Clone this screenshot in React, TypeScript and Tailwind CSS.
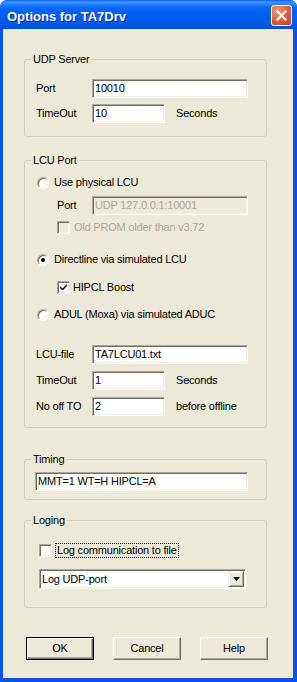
import React from "react";

const sunken =
  "border border-t-[#ACA899] border-l-[#ACA899] border-r-white border-b-white shadow-[inset_1px_1px_0_#716F64,inset_-1px_-1px_0_#F1EFE2]";

function Edit({ value, w, disabled }: { value: string; w: string; disabled?: boolean }) {
  return (
    <div
      className={`h-[19px] ${w} ${sunken} flex items-center pl-[2px] whitespace-nowrap overflow-hidden ${
        disabled ? "bg-[#ECE9D8] text-[#ACA899]" : "bg-white text-black"
      }`}
    >
      {value}
    </div>
  );
}

function Radio({ checked }: { checked?: boolean }) {
  return (
    <span
      className={`w-[12px] h-[12px] rounded-full bg-white ${sunken} flex items-center justify-center shrink-0`}
    >
      {checked && <span className="w-[4px] h-[4px] rounded-full bg-black" />}
    </span>
  );
}

function Check({ checked, disabled }: { checked?: boolean; disabled?: boolean }) {
  return (
    <span
      className={`w-[13px] h-[13px] ${sunken} flex items-center justify-center shrink-0 ${
        disabled ? "bg-[#ECE9D8]" : "bg-white"
      }`}
    >
      {checked && (
        <svg width="7" height="7" viewBox="0 0 7 7">
          <path d="M0 2 L0 4 L2 6 L3 6 L7 2 L7 0 L2.5 4.5 Z" fill="#000" />
        </svg>
      )}
    </span>
  );
}

function Group({
  title,
  className,
  children,
}: {
  title: string;
  className: string;
  children: React.ReactNode;
}) {
  return (
    <div className={`relative ml-[21px] w-[243px] border border-[#D0D0BF] rounded-[3px] ${className}`}>
      <span className="absolute left-[6px] top-[-7px] px-[2px] bg-[#ECE9D8] leading-[13px] whitespace-nowrap">
        {title}
      </span>
      {children}
    </div>
  );
}

function Button({ label, def }: { label: string; def?: boolean }) {
  return (
    <div
      className={`w-[68px] h-[23px] flex items-center justify-center bg-[#ECE9D8] ${
        def
          ? "border border-black shadow-[inset_1px_1px_0_#fff,inset_-1px_-1px_0_#716F64,inset_-2px_-2px_0_#ACA899]"
          : "border border-t-white border-l-white border-r-[#716F64] border-b-[#716F64] shadow-[inset_-1px_-1px_0_#ACA899]"
      }`}
    >
      {label}
    </div>
  );
}

export default function App() {
  return (
    <div className="w-[297px] h-[682px] bg-[#0A53E0] rounded-t-[7px] flex flex-col overflow-hidden font-['Liberation_Sans',Arial,sans-serif] text-[11px] tracking-[-0.2px] text-black leading-[13px]">
      {/* Title bar */}
      <div className="h-[29px] shrink-0 flex items-start pl-[7px] pr-[5px] bg-[linear-gradient(to_bottom,#0A5CE8_0px,#3D95FF_2px,#2786FF_4px,#0A6CF8_7px,#0060F2_12px,#005BEC_20px,#0057E4_25px,#004DD2_29px)]">
        <span className="mt-[9px] text-white font-bold text-[13px] leading-[15px] tracking-normal [text-shadow:1px_1px_0_#0B2A9A]">
          Options for TA7Drv
        </span>
        <div className="ml-auto mt-[5px] w-[21px] h-[21px] rounded-[3px] border border-white bg-[radial-gradient(circle_at_30%_25%,#F09A7C_0%,#E1663F_45%,#C4401D_100%)] flex items-center justify-center">
          <svg width="11" height="11" viewBox="0 0 11 11">
            <path d="M1.5 1.5 L9.5 9.5 M9.5 1.5 L1.5 9.5" stroke="#fff" strokeWidth="2.2" strokeLinecap="square" />
          </svg>
        </div>
      </div>

      {/* Body */}
      <div className="ml-[3px] mr-[4px] mb-[4px] bg-[#ECE9D8] flex flex-col flex-1">
        <Group title="UDP Server" className="mt-[30px]">
          <div className="flex flex-col pt-[19px] pb-[13px] pl-[11px] gap-[6px]">
            <div className="flex items-center">
              <span className="w-[56px]">Port</span>
              <Edit value="10010" w="w-[156px]" />
            </div>
            <div className="flex items-center">
              <span className="w-[56px]">TimeOut</span>
              <Edit value="10" w="w-[73px]" />
              <span className="ml-[11px]">Seconds</span>
            </div>
          </div>
        </Group>

        <Group title="LCU Port" className="mt-[23px]">
          <div className="flex flex-col pt-[15px] pb-[11px] pl-[11px]">
            <div className="h-[13px] flex items-center">
              <span className="ml-[1px]">
                <Radio />
              </span>
              <span className="ml-[5px]">Use physical LCU</span>
            </div>
            <div className="mt-[7px] flex items-center pl-[21px]">
              <span className="w-[35px]">Port</span>
              <Edit value="UDP 127.0.0.1:10001" w="w-[156px]" disabled />
            </div>
            <div className="mt-[6px] h-[13px] flex items-center pl-[21px]">
              <Check disabled />
              <span className="ml-[4px] text-[#ACA899]">Old PROM older than v3.72</span>
            </div>
            <div className="mt-[19px] h-[13px] flex items-center">
              <span className="ml-[1px]">
                <Radio checked />
              </span>
              <span className="ml-[5px]">Directline via simulated LCU</span>
            </div>
            <div className="mt-[15px] h-[13px] flex items-center pl-[21px]">
              <Check checked />
              <span className="ml-[3px]">HIPCL Boost</span>
            </div>
            <div className="mt-[14px] h-[13px] flex items-center">
              <span className="ml-[1px]">
                <Radio />
              </span>
              <span className="ml-[5px]">ADUL (Moxa) via simulated ADUC</span>
            </div>
            <div className="mt-[24px] flex items-center">
              <span className="w-[56px]">LCU-file</span>
              <Edit value="TA7LCU01.txt" w="w-[156px]" />
            </div>
            <div className="mt-[7px] flex items-center">
              <span className="w-[56px]">TimeOut</span>
              <Edit value="1" w="w-[73px]" />
              <span className="ml-[11px]">Seconds</span>
            </div>
            <div className="mt-[7px] flex items-center">
              <span className="w-[56px]">No off TO</span>
              <Edit value="2" w="w-[73px]" />
              <span className="ml-[11px]">before offline</span>
            </div>
          </div>
        </Group>

        <Group title="Timing" className="mt-[31px]">
          <div className="pt-[12px] pb-[8px] pl-[10px]">
            <Edit value="MMT=1 WT=H HIPCL=A" w="w-[213px]" />
          </div>
        </Group>

        <Group title="Loging" className="mt-[20px]">
          <div className="flex flex-col pt-[22px] pb-[18px] pl-[14px]">
            <div className="h-[15px] flex items-center">
              <Check />
              <span className="ml-[3px] h-[15px] border border-dotted border-black px-[1px] flex items-center">
                Log communication to file
              </span>
            </div>
            <div className={`mt-[11px] w-[207px] h-[20px] bg-white ${sunken} flex items-center`}>
              <span className="flex-1 pl-[2px]">Log UDP-port</span>
              <span className="mr-[1px] w-[16px] h-[16px] bg-[#ECE9D8] border border-t-[#F1EFE2] border-l-[#F1EFE2] border-r-[#716F64] border-b-[#716F64] shadow-[inset_1px_1px_0_#fff,inset_-1px_-1px_0_#ACA899] flex items-center justify-center">
                <svg width="7" height="4" viewBox="0 0 7 4">
                  <path d="M0 0 H7 L3.5 4 Z" fill="#000" />
                </svg>
              </span>
            </div>
          </div>
        </Group>

        <div className="mt-[29px] ml-[23px] flex gap-[19px]">
          <Button label="OK" def />
          <Button label="Cancel" />
          <Button label="Help" />
        </div>
      </div>
    </div>
  );
}
